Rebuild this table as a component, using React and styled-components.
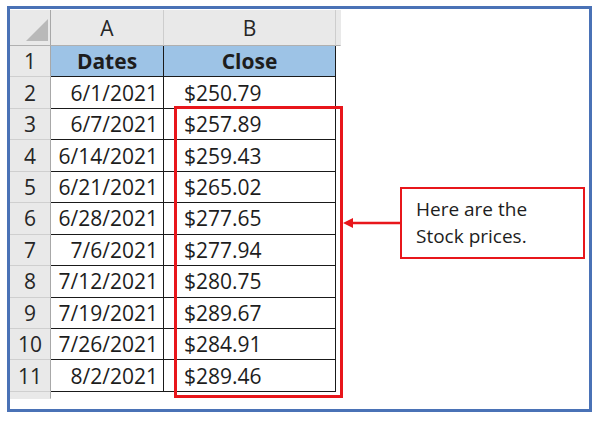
import styled, { createGlobalStyle } from "styled-components"

const rows = [
    ["6/1/2021", "$250.79"],
    ["6/7/2021", "$257.89"],
    ["6/14/2021", "$259.43"],
    ["6/21/2021", "$265.02"],
    ["6/28/2021", "$277.65"],
    ["7/6/2021", "$277.94"],
    ["7/12/2021", "$280.75"],
    ["7/19/2021", "$289.67"],
    ["7/26/2021", "$284.91"],
    ["8/2/2021", "$289.46"],
]

export default function App() {
    return (
        <>
            <Global />
            <Frame>
                <Sheet>
                    <Corner><Triangle /></Corner>
                    <ColHead>A</ColHead>
                    <ColHead>B</ColHead>
                    <ColHead $stub />

                    <RowHead>1</RowHead>
                    <Title $first>Dates</Title>
                    <Title>Close</Title>
                    <Blank />

                    {rows.map((r, i) => (
                        <Row key={i}>
                            <RowHead>{i + 2}</RowHead>
                            <DateCell>{r[0]}</DateCell>
                            <PriceCell>{r[1]}</PriceCell>
                            <Blank />
                        </Row>
                    ))}

                    <RowHead $partial />
                </Sheet>

                <Highlight />

                <Arrow width="58" height="14" viewBox="0 0 58 14">
                    <line x1="8" y1="7" x2="58" y2="7" stroke="#e8161b" strokeWidth="2.5" />
                    <polygon points="0,7 10,2 10,12" fill="#e8161b" />
                </Arrow>

                <Callout>
                    <span>Here are the</span>
                    <span>Stock prices.</span>
                </Callout>
            </Frame>
        </>
    )
}

const Global = createGlobalStyle`
    body {
        margin: 0;
        background: #ffffff;
        font-family: 'Open Sans', 'Liberation Sans', sans-serif;
        color: #1d1d1d;
    }
`
const Frame = styled.div`
    position: relative;
    box-sizing: border-box;
    margin: 6px 0 0 7px;
    width: 585px;
    height: 406px;
    border: 3px solid #4a72b6;
    padding: 1px 0 0 0;
    background: #ffffff;
`
const Sheet = styled.div`
    display: grid;
    grid-template-columns: 41px 113px 172px 5px;
    grid-template-rows: 36px repeat(11, 31.45px) 7px;
    width: 331px;
    font-size: 21px;
`
const Row = styled.div`
    display: contents;
`
const Corner = styled.div`
    display: flex;
    align-items: flex-end;
    justify-content: flex-end;
    padding: 0 2px 4px 0;
    background: #e9e9e9;
    border-right: 1px solid #a8a8a8;
    border-bottom: 1px solid #b0b0b0;
    box-sizing: border-box;
`
const Triangle = styled.div`
    width: 0;
    height: 0;
    border-left: 22px solid transparent;
    border-bottom: 22px solid #b9b9b9;
`
const ColHead = styled.div`
    display: flex;
    align-items: center;
    justify-content: center;
    box-sizing: border-box;
    background: #e9e9e9;
    border-right: 1px solid ${p => p.$stub ? "transparent" : "#cdcdcd"};
    border-bottom: 1px solid #b0b0b0;
    color: #262626;
`
const RowHead = styled.div`
    display: flex;
    align-items: center;
    justify-content: center;
    box-sizing: border-box;
    background: #e9e9e9;
    border-right: 1px solid #a8a8a8;
    border-bottom: 1px solid ${p => p.$partial ? "transparent" : "#cfcfcf"};
    color: #262626;
`
const Cell = styled.div`
    display: flex;
    align-items: center;
    box-sizing: border-box;
    border-right: 1px solid #1a1a1a;
    border-bottom: 1px solid #1a1a1a;
    white-space: nowrap;
`
const Title = styled(Cell)`
    justify-content: center;
    font-weight: 700;
    background: #9dc3e6;
`
const DateCell = styled(Cell)`
    justify-content: flex-end;
    padding-right: 5px;
`
const PriceCell = styled(Cell)`
    padding-left: 20px;
`
const Blank = styled.div``

const Highlight = styled.div`
    position: absolute;
    left: 164px;
    top: 97px;
    width: 169px;
    height: 292px;
    box-sizing: border-box;
    border: 3px solid #e8161b;
`
const Arrow = styled.svg`
    position: absolute;
    left: 333px;
    top: 207px;
`
const Callout = styled.div`
    position: absolute;
    left: 390px;
    top: 178px;
    width: 185px;
    height: 72px;
    box-sizing: border-box;
    border: 2.5px solid #e8161b;
    padding-left: 14px;
    display: flex;
    flex-direction: column;
    justify-content: center;
    font-size: 19px;
    line-height: 27px;
    color: #1d1d1d;
`
